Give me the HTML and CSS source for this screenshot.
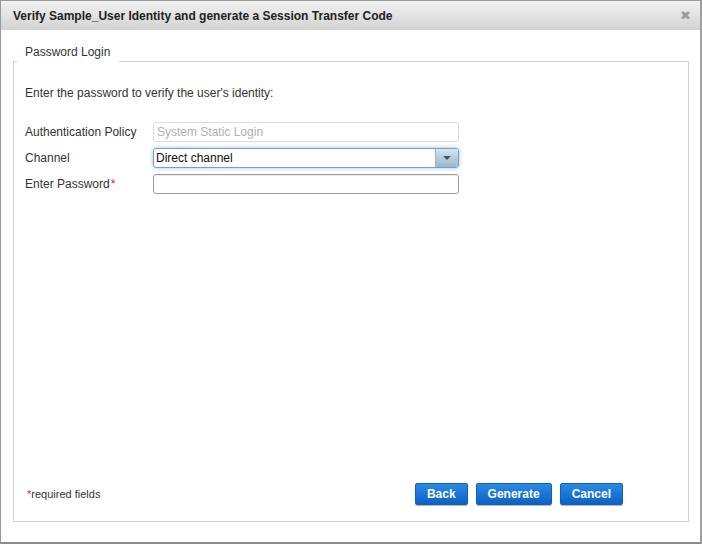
FILE: index.html
```html
<!DOCTYPE html>
<html lang="en">
<head>
  <meta charset="UTF-8">
  <title>Verify Identity</title>
  <link rel="stylesheet" href="styles.css">
</head>
<body>
  <div class="dialog">
    <div class="titlebar">
      <span class="title">Verify Sample_User Identity and generate a Session Transfer Code</span>
      <span class="close">&#x2716;</span>
    </div>
    <div class="content">
      <div class="tabs">
        <div class="tab">Password Login</div>
      </div>
      <div class="panel">
        <p class="intro">Enter the password to verify the user's identity:</p>
        <div class="row">
          <label>Authentication Policy</label>
          <div class="field disabled">System Static Login</div>
        </div>
        <div class="row">
          <label>Channel</label>
          <div class="field select">
            <span class="value">Direct channel</span>
            <span class="arrow"></span>
          </div>
        </div>
        <div class="row">
          <label>Enter Password<span class="req">*</span></label>
          <input type="password" class="field">
        </div>
        <div class="footer">
          <span class="note"><span class="req">*</span>required fields</span>
          <div class="buttons">
            <button>Back</button>
            <button>Generate</button>
            <button>Cancel</button>
          </div>
        </div>
      </div>
    </div>
  </div>
</body>
</html>
```

FILE: styles.css
```css
body {
  margin: 0;
  font-family: "Liberation Sans", Arial, sans-serif;
  font-size: 12px;
  color: #333;
  background: #fff;
}
.dialog {
  width: 702px;
  height: 544px;
  box-sizing: border-box;
  border: 1px solid #9a9a9a;
  border-bottom: 2px solid #8a8a8a;
  border-right: 2px solid #a0a0a0;
  display: flex;
  flex-direction: column;
}
.titlebar {
  height: 29px;
  padding: 0 9px 0 12px;
  display: flex;
  align-items: center;
  justify-content: space-between;
  background: linear-gradient(#f2f2f2, #d2d2d2);
}
.title {
  font-weight: bold;
  color: #222;
}
.close {
  color: #9c9c9c;
  font-size: 13px;
  font-family: "DejaVu Sans", sans-serif;
}
.content {
  flex: 1;
  display: flex;
  flex-direction: column;
  padding: 11px 11px 20px 12px;
}
.tabs {
  display: flex;
  padding-left: 4px;
  margin-bottom: -1px;
  position: relative;
}
.tab {
  height: 21px;
  line-height: 23px;
  padding: 0 8px;
  background: #fff;
  color: #333;
  width: 86px;
}
.panel {
  flex: 1;
  border: 1px solid #d0d0d0;
  padding: 24px 11px 16px 11px;
  display: flex;
  flex-direction: column;
}
.intro {
  margin: 0 0 22px 0;
}
.row {
  display: flex;
  align-items: center;
  margin-bottom: 6px;
}
.row label {
  width: 128px;
}
.req {
  color: #d22;
  margin-left: 1px;
}
.field {
  width: 306px;
  height: 20px;
  box-sizing: border-box;
  border: 1px solid #a8a8a8;
  border-radius: 3px;
  padding: 0 3px;
  font: inherit;
  margin: 0;
}
.disabled {
  border-color: #dcdcdc;
  color: #b0b0b0;
  line-height: 18px;
}
.select {
  display: flex;
  padding: 0 0 0 2px;
  border-color: #7d9fbd;
  box-shadow: 0 0 4px rgba(80, 140, 190, 0.55);
  color: #111;
  line-height: 18px;
}
.select .value {
  flex: 1;
}
.select .arrow {
  width: 22px;
  border-left: 1px solid #9ab4ca;
  background: linear-gradient(#d6e4ef, #9ab8d0);
  border-radius: 0 2px 2px 0;
  display: flex;
  align-items: center;
  justify-content: center;
}
.select .arrow::after {
  content: "";
  border-left: 4px solid transparent;
  border-right: 4px solid transparent;
  border-top: 4px solid #3b5670;
}
input.field {
  border-color: #9c9c9c;
  box-shadow: inset 0 1px 1px rgba(0, 0, 0, 0.08);
}
.footer {
  margin-top: auto;
  display: flex;
  align-items: center;
  padding-right: 54px;
}
.note {
  font-size: 11px;
  margin-left: 2px;
}
.note .req {
  margin: 0;
}
.buttons {
  margin-left: auto;
  display: flex;
  gap: 8px;
}
button {
  height: 22px;
  padding: 0 11px;
  font: bold 12px "Liberation Sans", Arial, sans-serif;
  color: #fff;
  background: linear-gradient(#2a8ae8, #0a62c4);
  border: 1px solid #1c5fa8;
  border-radius: 2px;
  box-shadow: 0 1px 1px rgba(0, 0, 0, 0.3);
}
```
